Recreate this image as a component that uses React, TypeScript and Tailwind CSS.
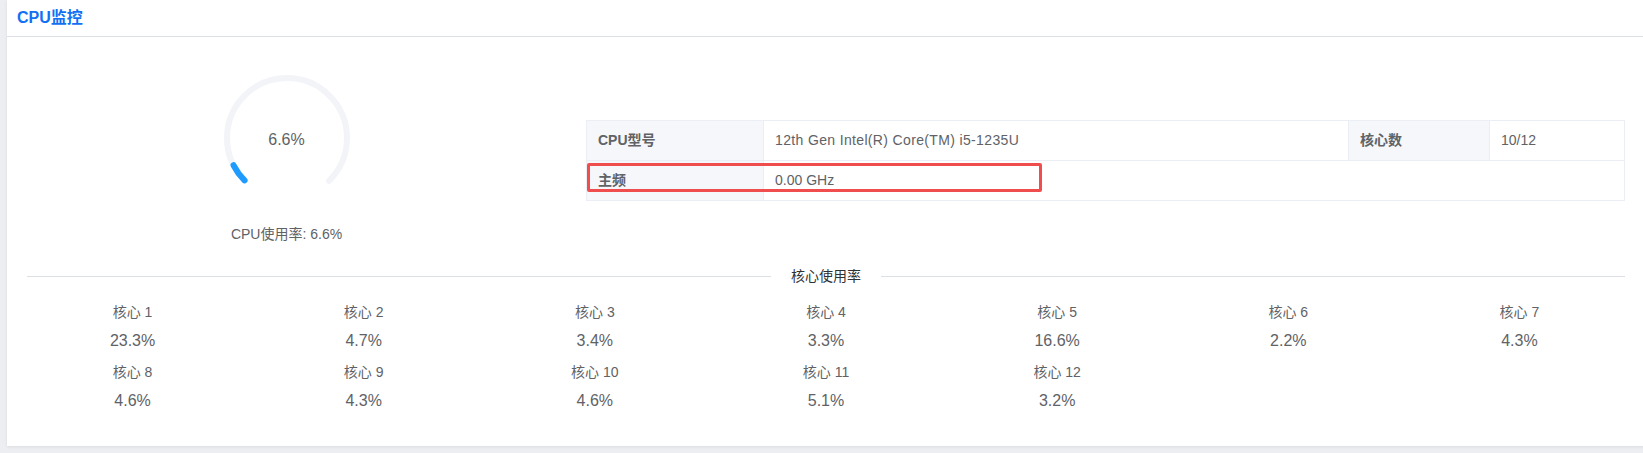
import React from 'react';

const font = { fontFamily: '"Liberation Sans", "Noto Sans CJK SC", sans-serif' };

const cores = [23.3, 4.7, 3.4, 3.3, 16.6, 2.2, 4.3, 4.6, 4.3, 4.6, 5.1, 3.2];

function Dashboard({ percent }: { percent: number }) {
    const r = 47.6;
    const perimeter = 2 * Math.PI * r;
    const rate = 0.75;
    const offset = -perimeter * (1 - rate) / 2;
    const d = `M 50 50 m 0 ${r} a ${r} ${r} 0 1 1 0 -${2 * r} a ${r} ${r} 0 1 1 0 ${2 * r}`;
    return (
        <div className="relative w-[126px] h-[126px]">
            <svg viewBox="0 0 100 100" className="w-[126px] h-[126px]">
                <path
                    d={d}
                    fill="none"
                    stroke="#f2f4f8"
                    strokeWidth={4.8}
                    strokeLinecap="round"
                    style={{ strokeDasharray: `${perimeter * rate}px, ${perimeter}px`, strokeDashoffset: offset }}
                />
                <path
                    d={d}
                    fill="none"
                    stroke="#1e9bff"
                    strokeWidth={4.8}
                    strokeLinecap="round"
                    style={{ strokeDasharray: `${perimeter * rate * percent / 100}px, ${perimeter}px`, strokeDashoffset: offset }}
                />
            </svg>
            <div className="absolute inset-0 flex items-center justify-center pt-[4px] text-[16px] text-[#606266]">
                {percent}%
            </div>
        </div>
    );
}

export default function App() {
    return (
        <div className="h-[453px] w-[1643px] bg-[#eceef2] pl-[7px] overflow-hidden" style={font}>
            <div className="h-[446px] w-[1638px] bg-white shadow-[0_1px_3px_rgba(0,0,0,0.08)]">
                <header className="h-[37px] border-b border-[#dcdfe6] px-[10px] flex items-center">
                    <h1 className="text-[16px] font-bold text-[#1170f3] leading-none pb-[1px]">CPU监控</h1>
                </header>

                <div className="px-[20px] pt-[38px]">
                    <div className="-mx-[10px] flex items-center">
                        <div className="w-[539px] flex flex-col items-center">
                            <Dashboard percent={6.6} />
                            <p className="mt-[23px] text-[14px] leading-[20px] text-[#606266]">CPU使用率: 6.6%</p>
                        </div>
                        <div className="flex-1 pl-[30px] pr-[10px] pt-[2px]">
                            <div className="relative">
                                <table className="w-full table-fixed border-collapse text-[14px] text-[#606266]">
                                    <colgroup>
                                        <col className="w-[177px]" />
                                        <col className="w-[585px]" />
                                        <col className="w-[141px]" />
                                        <col />
                                    </colgroup>
                                    <tbody>
                                        <tr className="h-[40px]">
                                            <td className="border border-[#ebeef5] bg-[#f5f7fa] px-[11px] font-bold">CPU型号</td>
                                            <td className="border border-[#ebeef5] px-[11px] tracking-[0.35px]">12th Gen Intel(R) Core(TM) i5-1235U</td>
                                            <td className="border border-[#ebeef5] bg-[#f5f7fa] px-[11px] font-bold">核心数</td>
                                            <td className="border border-[#ebeef5] px-[11px]">10/12</td>
                                        </tr>
                                        <tr className="h-[40px]">
                                            <td className="border border-[#ebeef5] bg-[#f5f7fa] px-[11px] font-bold">主频</td>
                                            <td colSpan={3} className="border border-[#ebeef5] px-[11px]">0.00 GHz</td>
                                        </tr>
                                    </tbody>
                                </table>
                                <div className="absolute left-[1px] top-[43px] w-[455px] h-[29px] border-[3px] border-[#f04d4f] rounded-[2px]" />
                            </div>
                        </div>
                    </div>

                    <div className="mt-[22px] flex items-center">
                        <div className="flex-1 border-t border-[#dcdfe6]" />
                        <span className="px-[20px] text-[14px] leading-[20px] text-[#303133]">核心使用率</span>
                        <div className="flex-1 border-t border-[#dcdfe6]" />
                    </div>

                    <div className="-mx-[10px] mt-[16px] grid grid-cols-7 gap-y-[9px]">
                        {cores.map((v, i) => (
                            <div key={i} className="flex flex-col items-center">
                                <span className="text-[14px] leading-[20px] text-[#606266]">核心 {i + 1}</span>
                                <span className="mt-[7px] text-[16px] leading-[24px] text-[#606266]">{v}%</span>
                            </div>
                        ))}
                    </div>
                </div>
            </div>
        </div>
    );
}
